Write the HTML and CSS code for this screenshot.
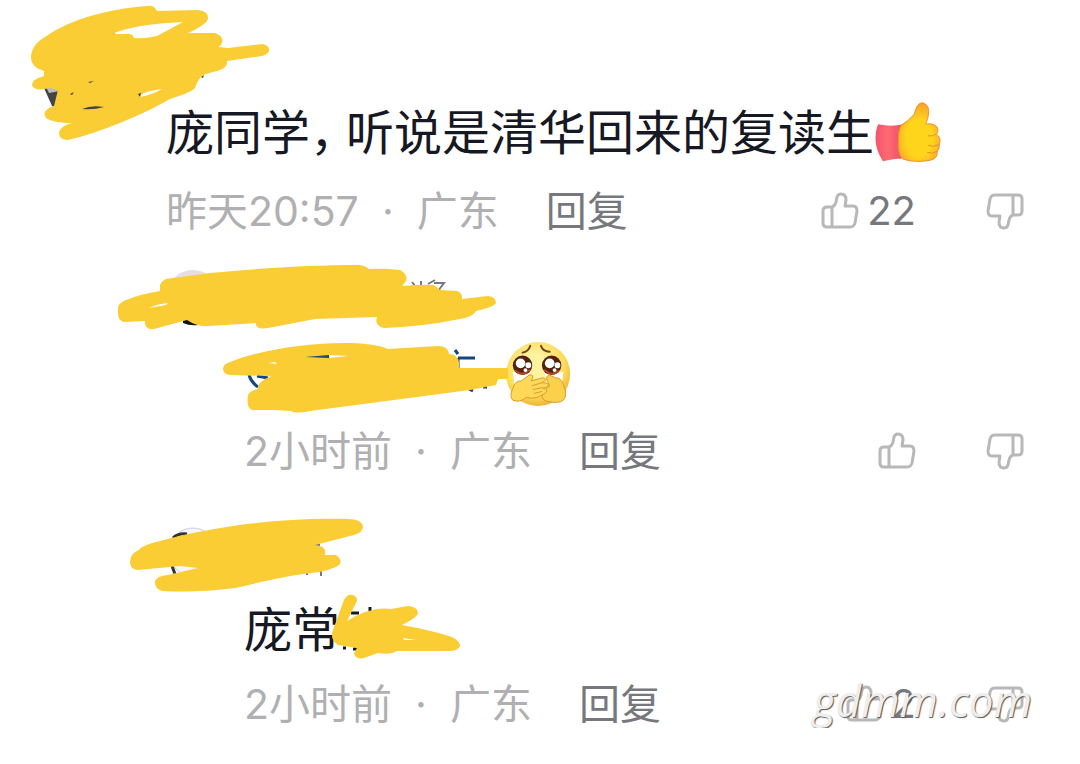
FILE: index.html
```html
<!DOCTYPE html>
<html lang="zh-CN">
<head>
    <meta charset="UTF-8">
    <meta name="viewport" content="width=device-width, initial-scale=1.0">
    <title>评论</title>
    <link rel="stylesheet" href="styles.css">
</head>
<body>
    <svg class="defs" aria-hidden="true">
        <symbol id="thumb" viewBox="0 0 38 38">
            <path d="M11 15H6Q2 15 2 19V31Q2 35 6 35H29Q33 35 34 31L36 19Q36 14 32 14H24L25 8Q25 2 20 2Q17 2 16 5L15 10Q14 14 11 15V35"/>
        </symbol>
    </svg>

    <main class="comments">
        <article class="comment">
            <header class="user user-main">
                <svg class="scribble scribble-1" viewBox="30 0 240 142" aria-hidden="true">
                    <path fill="#aaa" d="M94 40L112 32L120 36Z"/>
                    <path fill="#444" d="M44 88L60 86L56 107L52 106Z"/>
                    <path fill="#bbb" d="M46 87H60V91L49 93Z"/>
                    <path class="ink" fill-rule="evenodd" d="M45 37C70 19 112 8 148 6Q154 5 157 11L198 10Q208 11 208 18Q208 24 188 33H215Q224 36 222 43Q221 46 218 47L228 48L262 44Q270 45 269 51Q268 54 262 56L227 61Q228 67 220 70L203 75Q198 79 195 88Q192 92 170 99C142 115 99 133 68 140Q59 140 59 133Q60 126 72 123C60 123 50 121 46 118Q41 110 54 106L58 90L50 88Q34 92 32 85Q32 79 44 76V71Q31 67 31 58Q31 45 45 37ZM112 34Q134 24 183 22L157 36Q143 39 134 38Q132 33 125 34ZM140 97Q140 92 162 89Q152 95 140 97Z"/>
                    <path fill="#444" d="M82 109Q91 105 104 107Q94 110 82 109ZM70 94L74 92L72 95ZM88 82L94 81L90 83ZM138 94L141 93L140 97ZM201 77L204 75L203 78Z"/>
                </svg>
            </header>
            <p class="text">庞同学<span class="comma">，</span>听说是清华回来的复读生<svg class="emoji" viewBox="2 0 72 68" role="img" aria-label="赞">
                <defs>
                    <radialGradient id="hand" cx="50%" cy="60%" r="58%">
                        <stop offset="0.55" stop-color="#ffd51c"/>
                        <stop offset="1" stop-color="#f9a32b"/>
                    </radialGradient>
                    <linearGradient id="sleeve" x2="1">
                        <stop offset="0" stop-color="#f3536a"/>
                        <stop offset="0.4" stop-color="#ff6a72"/>
                        <stop offset="1" stop-color="#e94961"/>
                    </linearGradient>
                </defs>
                <path fill="url(#sleeve)" d="M5 24Q20 27 31 24L34 59Q22 59 10 62Q-2 43 5 24Z"/>
                <path fill="url(#hand)" stroke="#ef9130" d="M29 25Q37 20 42 14L45 6Q49 -1 55 4Q59 8 56 19L54 24Q62 22 66 27Q68 32 65 34Q71 38 68 45Q69 49 66 52Q67 59 59 61Q44 64 31 60Q25 56 26 40Q26 30 29 25Z"/>
                <path class="fold" stroke="#e78b28" d="M65 34Q61 37 57 36M68 45Q62 48 57 46M66 52Q61 55 56 53"/>
            </svg></p>
            <footer class="meta">
                <span class="time">昨天20:57</span><span class="dot">·</span><span class="place">广东</span>
                <button class="reply" type="button">回复</button>
                <div class="actions">
                    <button class="vote" type="button" aria-label="赞 22"><svg class="icon"><use href="#thumb"/></svg>22</button>
                    <button class="vote" type="button" aria-label="踩"><svg class="icon icon-down"><use href="#thumb"/></svg></button>
                </div>
            </footer>
        </article>

        <article class="comment comment-reply">
            <header class="user">
                <svg class="scribble scribble-2" viewBox="110 260 390 72" aria-hidden="true">
                    <circle cx="193" cy="297" r="27" fill="#e5dfe2"/>
                    <path fill="#111" d="M183 320H198V325Q190 326 183 323Z"/>
                    <path class="stroke-name" d="M395 286H402M412 282L415 286M421 281V287M428 284L435 280M434 283H444L438 291"/>
                    <path class="ink" d="M160 289Q159 282 166 279L210 273C265 268 310 265 360 265Q366 266 369 269Q382 268 400 270Q408 274 406 281L402 286Q423 284 434 285L440 290L457 291Q463 293 462 299L488 296Q496 297 496 303Q494 307 476 311Q473 317 460 319Q420 327 384 328Q374 326 377 317Q344 318 315 319L268 328Q255 330 256 323Q228 325 205 326Q196 326 187 320L154 329Q144 330 145 321L124 322Q118 321 118 313V307Q119 303 126 300Q141 294 160 291Z"/>
                    <path fill="#fff" d="M149 308Q157 304 168 303L166 305Z"/>
                </svg>
            </header>
            <p class="text text-mention"><svg class="emoji" viewBox="2 0 72 68" role="img" aria-label="泪目">
                <defs>
                    <radialGradient id="face" cx="45%" cy="38%" r="62%">
                        <stop offset="0.3" stop-color="#fff2a0"/>
                        <stop offset="0.75" stop-color="#fddc58"/>
                        <stop offset="1" stop-color="#eeb436"/>
                    </radialGradient>
                </defs>
                <circle cx="36" cy="34" r="33" fill="url(#face)"/>
                <path fill="#fff" d="M10 32H28L26 44L12 47ZM43 32H62L60 48L45 43Z"/>
                <circle cx="20" cy="25" r="10" fill="#542010"/>
                <circle cx="50" cy="25" r="10" fill="#542010"/>
                <path class="fold" stroke="#b44a25" stroke-width="2" d="M13 31Q20 37 27 30M43 30Q50 37 57 31"/>
                <g fill="#fff"><circle cx="18" cy="23" r="5"/><circle cx="26" cy="25" r="3"/><circle cx="23" cy="30" r="2"/><circle cx="48" cy="23" r="5"/><circle cx="56" cy="25" r="3"/><circle cx="53" cy="30" r="2"/></g>
                <path class="fold" stroke="#73431b" stroke-width="2" d="M20 12Q26 11 28 5M39 5Q41 11 48 11"/>
                <path fill="#fbd04a" stroke="#d59a2b" d="M62 45Q59 37 54 38L50 36Q44 34 45 40L48 46L41 53Q38 60 45 62Q57 65 62 61Q67 56 62 45Z"/>
                <path fill="#ffd957" stroke="#d59a2b" d="M10 49Q12 41 19 41L27 35Q33 34 29 41L41 38Q47 39 40 43Q49 43 46 47L41 49Q48 50 43 54L36 58Q28 60 24 58Q17 64 10 61Q6 57 10 49Z"/>
                <path class="fold" stroke="#d59a2b" d="M30 46L40 43M31 50L41 48M32 54L40 52"/>
            </svg>
                <svg class="scribble scribble-3" viewBox="215 340 295 75" aria-hidden="true">
                    <path class="stroke-link" d="M249 375Q251 382 258 387M257 376L268 378M455 350L458 354M458 358H475M458 358V368M469 389L473 391M483 387H487"/>
                    <path class="ink" d="M223 369Q223 364 230 362C275 344 360 337 388 349L438 346Q448 346 449 354Q457 354 459 362V368H508V379H498L496 385L470 390L310 411Q295 414 291 411L275 410L252 410Q246 408 248 395Q250 391 258 389Q257 382 271 376L230 375Q223 374 223 369Z"/>
                    <path fill="#24476c" d="M305 357L329 355V358Z"/>
                    <path fill="#fff" d="M329 355L348 356L330 358ZM268 363L275 362L277 364Z"/>
                </svg>
            </p>
            <footer class="meta">
                <span class="time">2小时前</span><span class="dot">·</span><span class="place">广东</span>
                <button class="reply" type="button">回复</button>
                <div class="actions">
                    <button class="vote" type="button" aria-label="赞"><svg class="icon"><use href="#thumb"/></svg></button>
                    <button class="vote" type="button" aria-label="踩"><svg class="icon icon-down"><use href="#thumb"/></svg></button>
                </div>
            </footer>
        </article>

        <article class="comment comment-reply">
            <header class="user user-last">
                <svg class="scribble scribble-4" viewBox="125 515 245 80" aria-hidden="true">
                    <circle cx="193" cy="552" r="24" fill="#f6f6fa" stroke="#ccd"/>
                    <path fill="none" stroke="#333" stroke-width="3" d="M173 538Q178 533 187 534M172 566L175 574"/>
                    <path class="stroke-name" d="M308 545H320M307 572V575M321 568V576"/>
                    <path class="ink" d="M130 563Q130 553 139 550Q142 545 160 541C210 527 280 517 348 519Q362 519 363 527Q363 532 354 535L315 545Q327 546 325 555L336 555Q342 559 340 564Q337 568 320 572C290 575 265 581 235 588Q197 593 162 591Q154 588 155 581Q157 576 168 575L198 568L180 566L138 570Q131 570 130 563Z"/>
                </svg>
            </header>
            <p class="text">庞常<svg class="scribble scribble-5" viewBox="325 590 140 72" aria-hidden="true">
                    <path fill="none" stroke="#161823" stroke-width="3" d="M351 613H359M370 607V611M343 648H346M353 649H358"/>
                    <path class="ink" d="M344 600Q348 592 355 596Q359 599 355 605L347 621Q371 606 391 609L408 606Q418 607 418 613Q418 617 402 625Q430 630 452 637Q460 641 460 646Q458 651 449 651L397 651Q390 655 378 653L364 658Q355 660 354 653L357 648Q344 646 338 645Q329 639 333 630Z"/>
                    <path fill="#fff" d="M403 638L416 640H404Z"/>
                </svg></p>
            <footer class="meta meta-last">
                <span class="time">2小时前</span><span class="dot">·</span><span class="place">广东</span>
                <button class="reply" type="button">回复</button>
                <div class="actions">
                    <button class="vote" type="button" aria-label="赞 2"><svg class="icon"><use href="#thumb"/></svg>2</button>
                    <button class="vote" type="button" aria-label="踩"><svg class="icon icon-down"><use href="#thumb"/></svg></button>
                </div>
                <span class="watermark">gdmm.com</span>
            </footer>
        </article>
    </main>
</body>
</html>
```
FILE: styles.css
```css
body {
    margin: 0;
    background-color: #fff;
    color: #161823;
    font-family: Inter, "Noto Sans CJK SC", sans-serif;
}
.defs {
    display: none;
}
.comment {
    padding: 0 56px 0 166px;
}
.comment-reply {
    padding-left: 244px;
}
.user {
    height: 106px;
}
.user-main {
    height: 101px;
}
.user-last {
    height: 123px;
}
.text {
    display: flex;
    align-items: flex-start;
    height: 64px;
    margin: 0;
    font-family: "Noto Sans CJK SC", sans-serif;
    font-size: 48px;
    line-height: 56px;
    white-space: nowrap;
}
.text-mention {
    padding-left: 260px;
}
.comma {
    padding-right: 12px;
    font-feature-settings: "halt";
}
.emoji {
    width: 72px;
    height: 66px;
    flex: none;
}
.fold {
    fill: none;
    stroke-linecap: round;
}

/* meta line */
.meta {
    display: flex;
    align-items: center;
    position: relative;
    height: 48px;
    margin-top: 22px;
    color: #b0b0b3;
    font-size: 41px;
    line-height: 48px;
    white-space: nowrap;
}
.meta-last {
    margin-top: 18px;
}
.dot {
    width: 58px;
    text-align: center;
}
button {
    padding: 0;
    border: none;
    background: none;
    color: #77787d;
    font: inherit;
    cursor: pointer;
}
.reply {
    margin-left: 47px;
}
.actions {
    display: flex;
    gap: 70px;
    margin-left: auto;
}
.vote {
    display: flex;
    align-items: center;
    gap: 8px;
    font-size: 40px;
}
.icon {
    width: 38px;
    height: 38px;
    fill: none;
    stroke: #b8b8b8;
    stroke-width: 3;
    stroke-linejoin: round;
}
.icon-down {
    transform: rotate(180deg);
}

/* marker strokes over names */
.scribble {
    position: absolute;
}
.ink {
    fill: #facd34;
}
.stroke-name {
    fill: none;
    stroke: #77787d;
    stroke-width: 2;
}
.stroke-link {
    fill: none;
    stroke: #12477f;
    stroke-width: 3;
}
.scribble-1 {
    left: 30px;
    top: 0;
    width: 240px;
    height: 142px;
}
.scribble-2 {
    left: 110px;
    top: 260px;
    width: 390px;
    height: 72px;
}
.scribble-3 {
    left: 215px;
    top: 340px;
    width: 295px;
    height: 75px;
}
.scribble-4 {
    left: 125px;
    top: 515px;
    width: 245px;
    height: 80px;
}
.scribble-5 {
    left: 325px;
    top: 590px;
    width: 140px;
    height: 72px;
}
.watermark {
    position: absolute;
    right: -8px;
    top: -4px;
    color: #eee;
    font-family: "Open Sans", sans-serif;
    font-size: 44px;
    font-style: italic;
    text-shadow: 1px 1px 1px #555;
}
```
